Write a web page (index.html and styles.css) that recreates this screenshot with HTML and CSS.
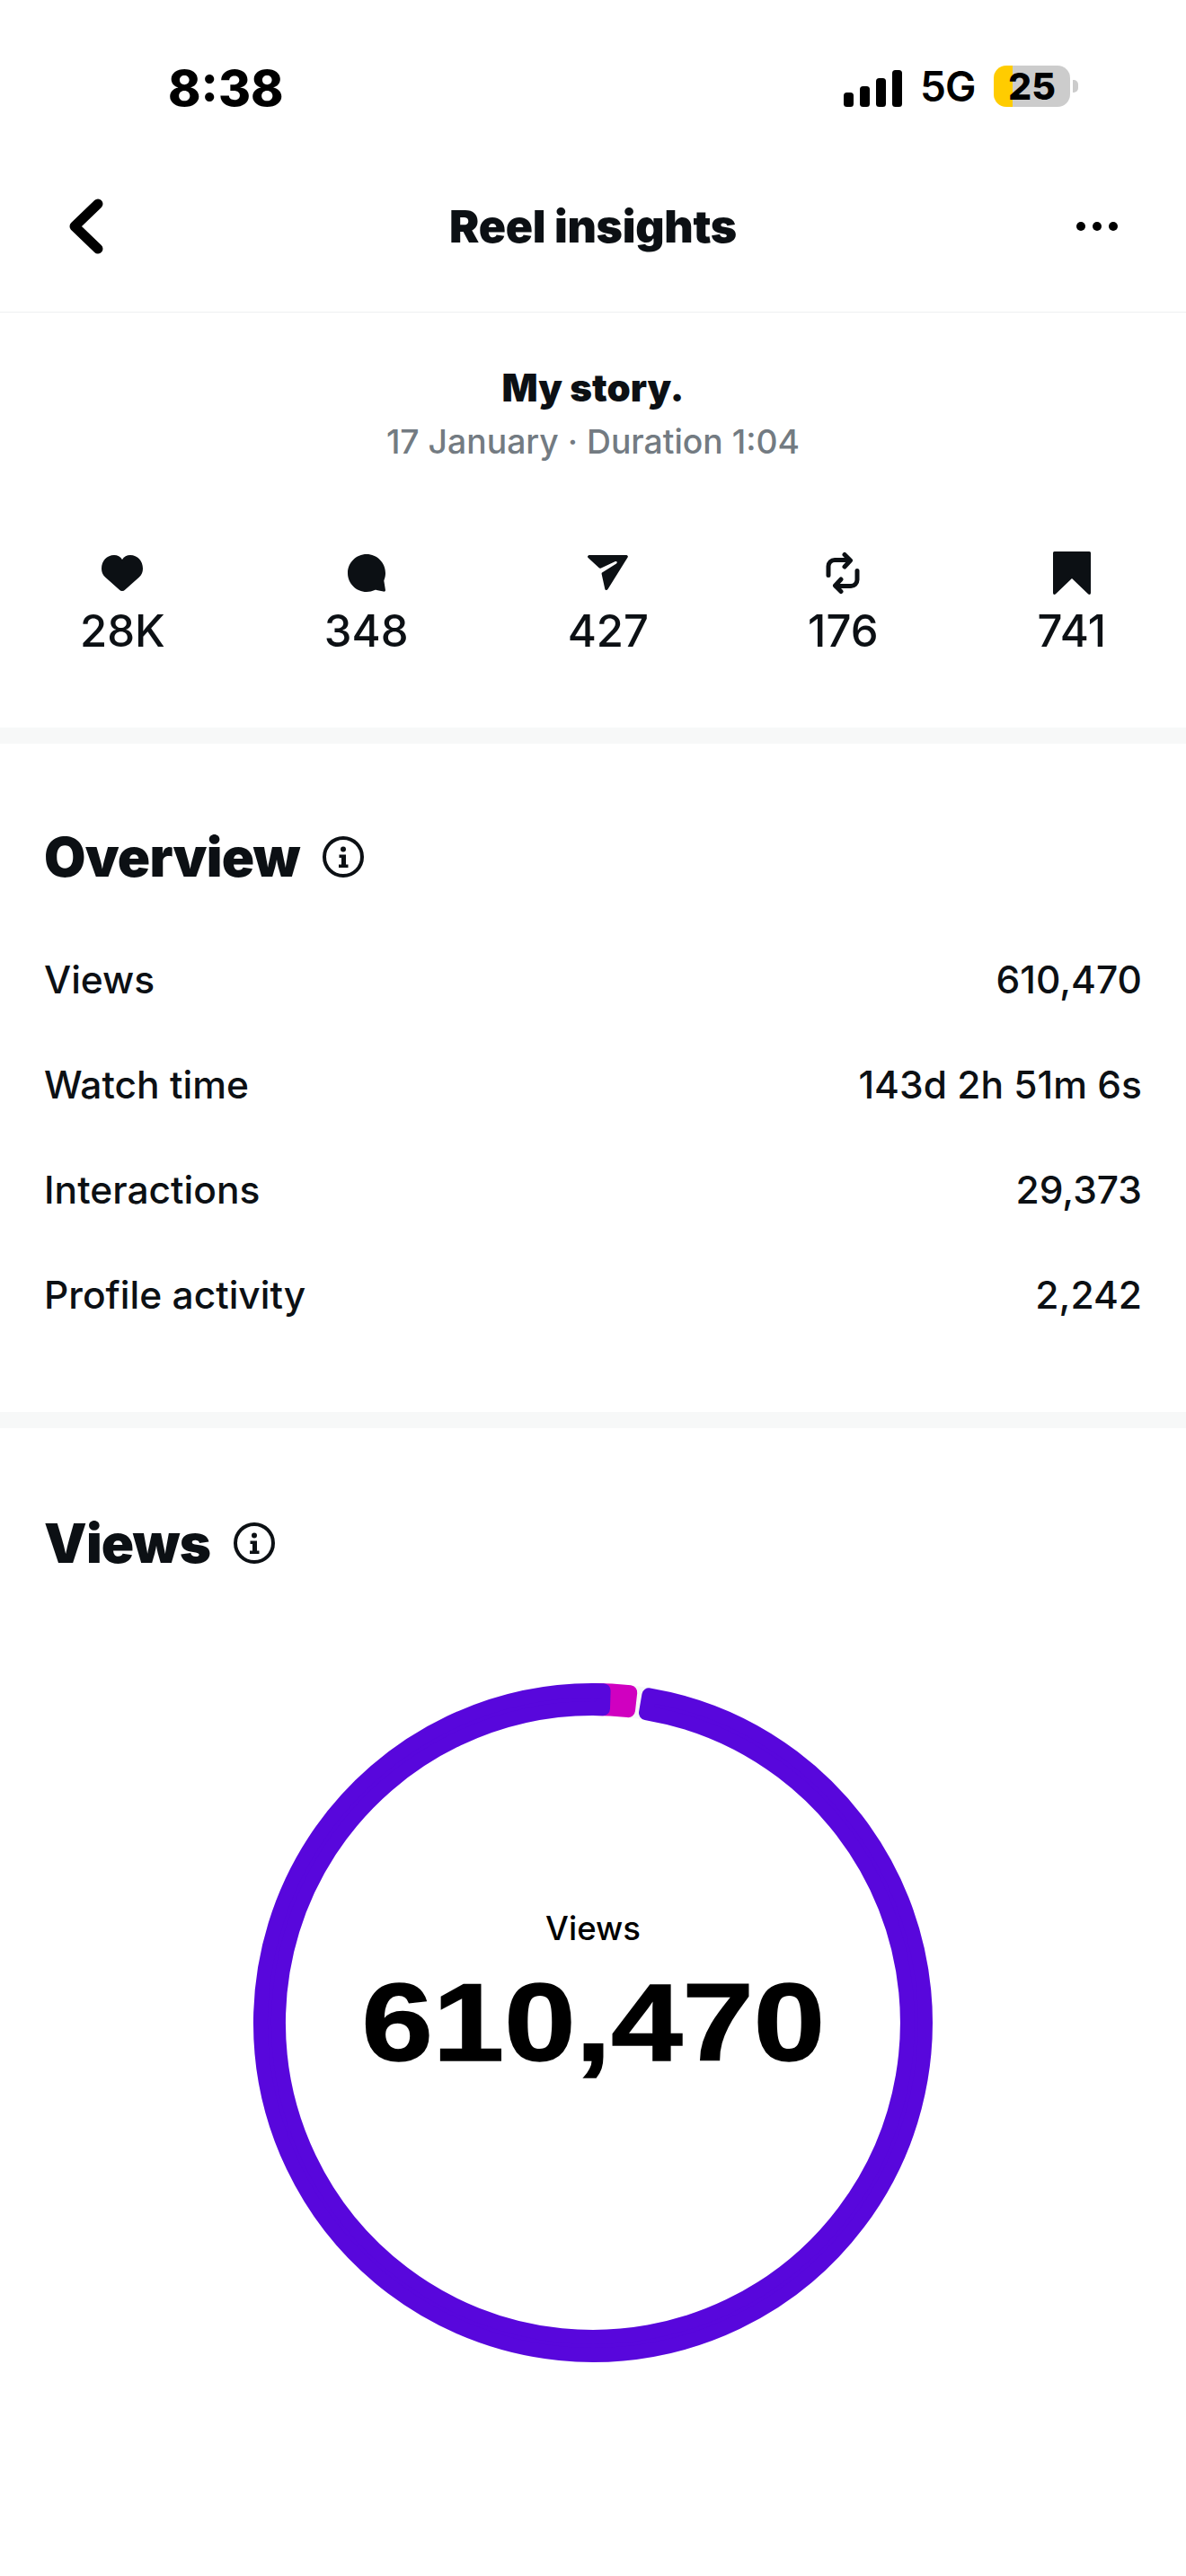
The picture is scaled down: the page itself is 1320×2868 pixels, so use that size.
FILE: index.html
```html
<!DOCTYPE html>
<html lang="en">
<head>
<meta charset="utf-8">
<title>Reel insights</title>
<link rel="stylesheet" href="styles.css">
</head>
<body>
<div class="page">
  <div class="status">
    <div class="time">8:38</div>
    <div class="status-right">
      <div class="signal"><i class="b1"></i><i class="b2"></i><i class="b3"></i><i class="b4"></i></div>
      <div class="net">5G</div>
      <div class="battery"><div class="battery-body">25</div><div class="battery-nub"></div></div>
    </div>
  </div>
  <header class="nav">
    <svg class="back" viewBox="0 0 44 64" width="44" height="64"><polyline points="35,7 9,32 35,57" fill="none" stroke="#000" stroke-width="11" stroke-linecap="round" stroke-linejoin="round"/></svg>
    <h1 class="nav-title">Reel insights</h1>
    <div class="more"><i></i><i></i><i></i></div>
  </header>
  <section class="summary">
    <div class="reel-title">My story.</div>
    <div class="reel-meta">17 January · Duration 1:04</div>
    <div class="stats">
      <div class="stat">
        <svg class="stat-icon" viewBox="0 0 46 40" width="46" height="40"><path class="ink" d="M23 40c-1.2 0-2.3-.5-3.3-1.5L4 24.5C1.3 22 0 19 0 15 0 6.5 6 0 14 0c3.8 0 7 1.7 9 5 2-3.3 5.200-5 9-5 8 0 14 6.500 14 15 0 4-1.300 7-4 9.500L26.300 38.500c-1 1-2.100 1.500-3.300 1.500z"/></svg>
        <div class="stat-num">28K</div>
      </div>
      <div class="stat">
        <svg class="stat-icon" viewBox="0 0 42 42" width="42" height="42"><path class="ink" d="M21 0C32.600 0 42 9.400 42 21c0 2.800-.5 5.200-1.400 7.600-.3.8-.3 1.400-.1 2.200l1.400 8.600c.3 1.600-.6 2.600-2.200 2.200l-7.500-1.700c-.8-.2-1.400-.1-2.200.2-2.800 1.300-5.700 1.900-9 1.900C9.400 42 0 32.600 0 21S9.400 0 21 0z"/></svg>
        <div class="stat-num">348</div>
      </div>
      <div class="stat">
        <svg class="stat-icon" viewBox="0 0 45 40" width="45" height="40"><path class="ink" d="M2.500 0H42.500c1.900 0 2.900 1 2.100 2.500L22.500 38c-1 1.500-2.900 1.300-3.200-.3L15.600 21c-.1-.8.1-1.200.9-1.700L32 9.500c1.700-1.200.3-3-1.600-2.200L15 14.500c-1 .4-1.800.3-2.500-.4L.6 3C-.8 1.600.3 0 2.500 0z"/></svg>
        <div class="stat-num">427</div>
      </div>
      <div class="stat">
        <svg class="stat-icon" viewBox="0 0 38 46" width="38" height="46"><path class="line" d="M3 25.500V15.500a7 7 0 0 1 7-7H27M21 2.500L27.500 9 21 16M35 20.500V30.500a7 7 0 0 1-7 7H11M17 43.500L10.500 37 17 30"/></svg>
        <div class="stat-num">176</div>
      </div>
      <div class="stat">
        <svg class="stat-icon" viewBox="0 0 42 48" width="42" height="48"><path class="ink" d="M1.500 0H40.500A1.500 1.500 0 0 1 42 1.500V46c0 2-1.700 2.600-3 1.200L21 30 3 47.200C1.700 48.600 0 48 0 46V1.500A1.500 1.500 0 0 1 1.500 0z"/></svg>
        <div class="stat-num">741</div>
      </div>
    </div>
  </section>
  <div class="band"></div>
  <section class="overview">
    <div class="heading">
      <h2 class="heading-text">Overview</h2>
      <svg class="info" viewBox="0 0 46 46" width="46" height="46"><circle cx="23" cy="23" r="21" fill="none" stroke="#0c1014" stroke-width="4"/><circle cx="23" cy="14.500" r="3" fill="#0c1014"/><path fill="#0c1014" d="M18.500 20.500h7.500v11h2.500v3.500h-10.500v-3.500h3v-7.500h-2.500z"/></svg>
    </div>
    <div class="rows">
      <div class="row"><span>Views</span><span>610,470</span></div>
      <div class="row"><span>Watch time</span><span>143d 2h 51m 6s</span></div>
      <div class="row"><span>Interactions</span><span>29,373</span></div>
      <div class="row"><span>Profile activity</span><span>2,242</span></div>
    </div>
  </section>
  <div class="band"></div>
  <section class="views">
    <div class="heading">
      <h2 class="heading-text">Views</h2>
      <svg class="info" viewBox="0 0 46 46" width="46" height="46"><circle cx="23" cy="23" r="21" fill="none" stroke="#0c1014" stroke-width="4"/><circle cx="23" cy="14.500" r="3" fill="#0c1014"/><path fill="#0c1014" d="M18.500 20.500h7.500v11h2.500v3.500h-10.500v-3.500h3v-7.500h-2.500z"/></svg>
    </div>
    <div class="donut">
      <svg class="donut-svg" viewBox="0 0 760 760" width="760" height="760">
        <circle cx="380" cy="380" r="360" fill="none" stroke="#f6f8f8" stroke-width="36"/>
        <path class="seg-magenta" d="M380 10A370 370 0 0 1 421.240 12.300L419.010 32.170A350 350 0 0 0 380 30Z"/>
        <path class="seg-purple" d="M442.340 15.290A370 370 0 1 1 391.620 10.180L390.990 30.170A350 350 0 1 0 438.970 35.010Z"/>
      </svg>
      <div class="donut-center">
        <div class="donut-label">Views</div>
        <div class="donut-value">610,470</div>
      </div>
    </div>
  </section>
</div>
</body>
</html>
```

FILE: styles.css
```css
* { box-sizing: border-box; }
html, body { margin: 0; padding: 0; background: #fff; }
body { font-family: Inter, "Liberation Sans", sans-serif; color: #0c1014; }
.page { width: 1320px; height: 2868px; overflow: hidden; background: #fff; }

.status { display: flex; justify-content: space-between; align-items: center; height: 46px; margin-top: 73px; padding: 0 120px 0 187px; }
.time { font-size: 55px; font-weight: 800; line-height: 46px; color: #000; position: relative; top: 2px; }
.status-right { display: flex; align-items: center; }
.signal { display: flex; align-items: flex-end; gap: 7px; height: 41px; margin-top: 5px; }
.signal i { display: block; width: 11px; background: #000; border-radius: 3.5px; }
.signal .b1 { height: 16px; }
.signal .b2 { height: 23px; }
.signal .b3 { height: 32px; }
.signal .b4 { height: 41px; }
.net { font-size: 46px; font-weight: 600; color: #000; line-height: 46px; margin-left: 20px; letter-spacing: -1px; width: 82px; }
.battery { display: flex; align-items: center; gap: 3px; }
.battery-body { width: 85px; height: 46px; border-radius: 14px; background: linear-gradient(90deg, #ffcc00 21px, #cccccc 21px); font-size: 41px; font-weight: 800; line-height: 46px; text-align: center; color: #000; }
.battery-nub { width: 6px; height: 14px; background: #ccc; border-radius: 0 5px 5px 0; }

.nav { display: flex; align-items: center; justify-content: space-between; height: 192px; margin-top: 37px; padding: 0 76px 0 74px; position: relative; border-bottom: 1px solid #eef0f1; }
.back { display: block; }
.nav-title { position: absolute; left: 0; right: 0; margin: 0; text-align: center; font-size: 50px; font-weight: 900; line-height: 60px; letter-spacing: -0.3px; }
.more { display: flex; gap: 8px; }
.more i { display: block; width: 10px; height: 10px; border-radius: 50%; background: #000; }

.summary { height: 462px; padding-top: 59px; text-align: center; }
.reel-title { font-size: 42px; font-weight: 900; line-height: 50px; }
.reel-meta { font-size: 37.3px; font-weight: 500; line-height: 44px; margin-top: 13px; color: #737b82; }
.stats { display: flex; justify-content: space-between; padding: 0 89px; margin-top: 100px; }
.stat { display: flex; flex-direction: column; align-items: center; }
.stat-icon { display: block; height: 48px; }
.ink { fill: #0c1014; }
.line { fill: none; stroke: #0c1014; stroke-width: 5; stroke-linecap: round; stroke-linejoin: round; }
.stat-num { font-size: 49px; font-weight: 500; line-height: 58px; margin-top: 12px; }

.band { height: 18px; background: #f7f8f8; }

.overview { height: 744px; padding: 93px 49px 0; }
.views { padding: 95px 0 0; }
.views .heading { padding-left: 49px; }
.heading { display: flex; align-items: center; gap: 26px; height: 66px; }
.heading-text { margin: 0; font-size: 60px; font-weight: 900; line-height: 66px; letter-spacing: -0.8px; }
.info { display: block; }

.rows { margin-top: 45px; }
.row { display: flex; justify-content: space-between; align-items: center; height: 117px; font-size: 42.5px; font-weight: 500; }

.donut { display: grid; width: 760px; height: 760px; margin: 121px auto 0; }
.donut-svg, .donut-center { grid-area: 1 / 1; }
.donut-svg { display: block; overflow: visible; }
.seg-magenta { fill: #d000c0; stroke: #d000c0; stroke-width: 16; stroke-linejoin: round; }
.seg-purple { fill: #5807dc; stroke: #5807dc; stroke-width: 16; stroke-linejoin: round; }
.donut-center { display: flex; flex-direction: column; align-items: center; justify-content: center; padding-bottom: 62px; color: #000; }
.donut-label { font-size: 36.5px; font-weight: 500; line-height: 44px; }
.donut-value { font-family: "Liberation Sans", Arial, sans-serif; font-size: 123px; font-weight: 700; line-height: 130px; margin-top: 18px; transform: scaleX(1.16); -webkit-text-stroke: 1.5px #000; }
```
